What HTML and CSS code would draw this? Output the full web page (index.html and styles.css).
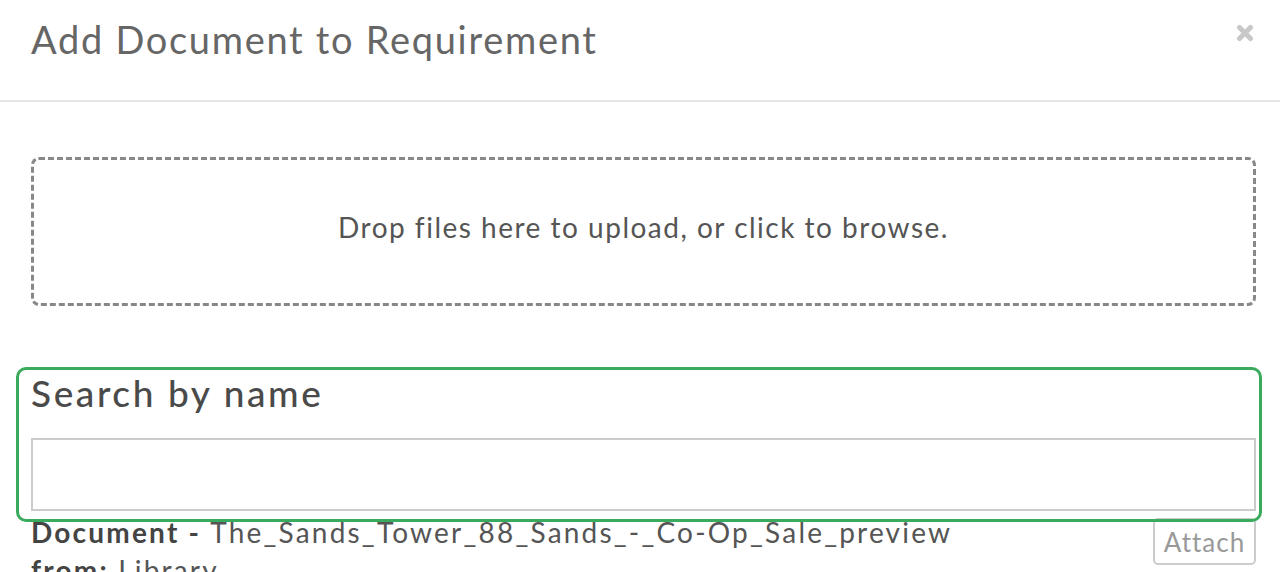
FILE: index.html
```html
<!DOCTYPE html>
<html>
<head>
<meta charset="utf-8">
<link rel="stylesheet" href="styles.css">
</head>
<body>
<div class="modal">
  <div class="modal-header">
    <h4 class="modal-title">Add Document to Requirement</h4>
    <span class="close" aria-label="Close"><svg width="18" height="18" viewBox="0 0 18 18"><path d="M3.5 3.5 L14.5 14.5 M14.5 3.5 L3.5 14.5" stroke="#c8c8c8" stroke-width="5" stroke-linecap="round"/></svg></span>
  </div>
  <div class="modal-body">
    <div class="dropzone">Drop files here to upload, or click to browse.</div>
    <div class="search-group">
      <label class="search-label">Search by name</label>
      <input class="search-input" type="text">
      <div class="highlight"></div>
    </div>
    <div class="doc-row">
      <div class="doc-info">
        <div><b>Document - </b>The_Sands_Tower_88_Sands_-_Co-Op_Sale_preview</div>
        <div><b>from:</b> Library</div>
      </div>
      <button class="attach">Attach</button>
    </div>
  </div>
</div>
</body>
</html>
```

FILE: styles.css
```css
* { box-sizing: border-box; }
html, body { margin: 0; padding: 0; background: #fff; overflow: hidden; }
body { font-family: Lato, "Open Sans", sans-serif; color: #555; }
.modal { width: 1280px; height: 572px; }
.modal-header {
  height: 102px;
  border-bottom: 2px solid #e5e5e5;
  display: flex;
  justify-content: space-between;
  align-items: flex-start;
  padding: 15px 26px 0 31px;
}
.modal-title {
  margin: 0;
  font-size: 38px;
  font-weight: 400;
  line-height: 48px;
  letter-spacing: 1.7px;
  color: #666;
}
.close { display: block; margin-top: 9px; line-height: 0; }
.modal-body { padding: 55px 24px 0 31px; }
.dropzone {
  height: 149px;
  border: 3px dashed #888;
  border-radius: 8px;
  display: flex;
  align-items: center;
  justify-content: center;
  padding-bottom: 10px;
  font-size: 28px;
  letter-spacing: 1.5px;
  color: #555;
}
.search-group { position: relative; margin-top: 65px; }
.search-label {
  display: block;
  font-size: 37px;
  font-weight: 500;
  line-height: 44px;
  letter-spacing: 2.6px;
  color: #4a4a4a;
}
.search-input {
  display: block;
  width: 100%;
  height: 73px;
  margin-top: 23px;
  border: 2px solid #ccc;
  background: #fff;
}
.highlight {
  position: absolute;
  left: -15px;
  top: -4px;
  width: 1246px;
  height: 155px;
  border: 3px solid #3aaa5c;
  border-radius: 10px;
  pointer-events: none;
}
.doc-row {
  display: flex;
  justify-content: space-between;
  align-items: flex-start;
  margin-top: 2px;
}
.doc-info { font-size: 28px; line-height: 38px; color: #555; letter-spacing: 2.2px; }
.doc-info b { font-weight: 700; color: #444; }
.attach {
  margin-top: 5px;
  width: 103px;
  height: 47px;
  border: 2px solid #ccc;
  border-radius: 5px;
  background: #fff;
  font-family: inherit;
  font-size: 26px;
  letter-spacing: 1px;
  color: #999;
  padding: 0;
}
```
